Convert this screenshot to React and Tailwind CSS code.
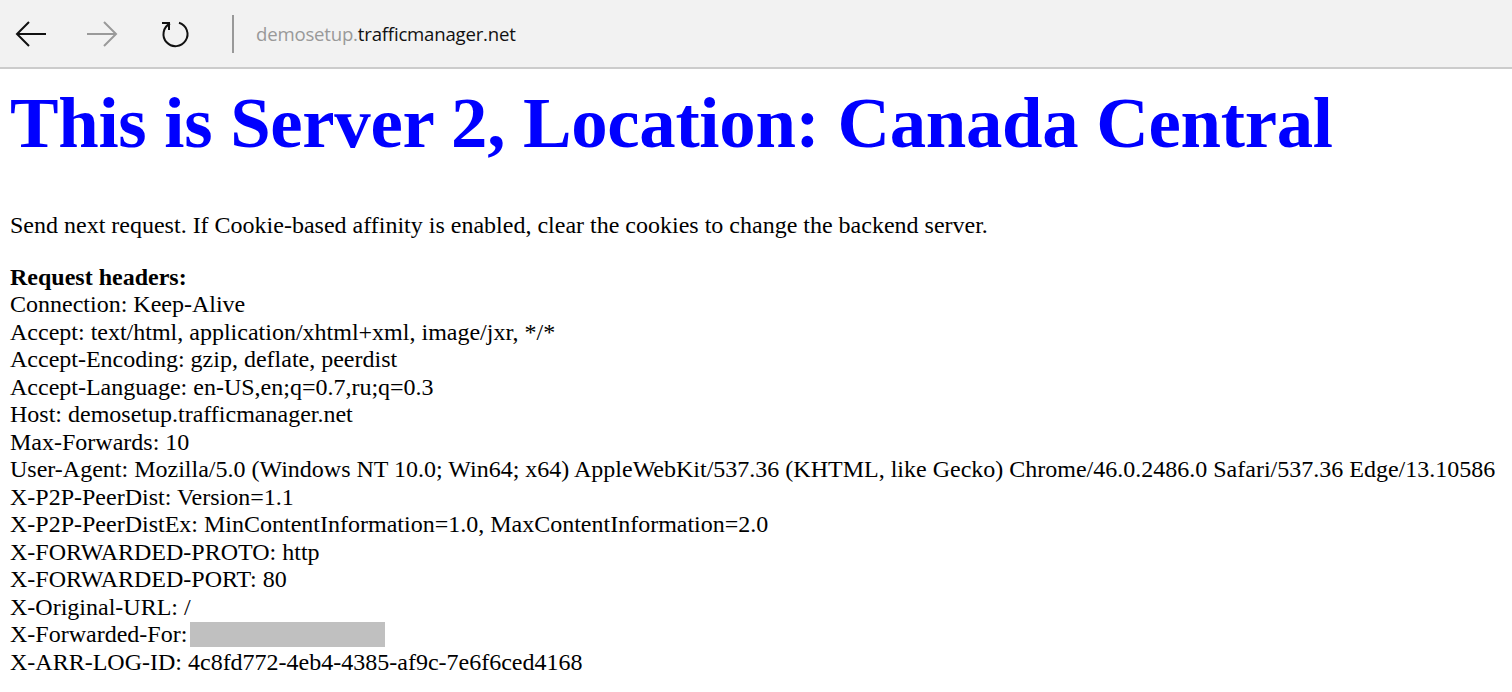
import React from "react";

const headers = [
  "Connection: Keep-Alive",
  "Accept: text/html, application/xhtml+xml, image/jxr, */*",
  "Accept-Encoding: gzip, deflate, peerdist",
  "Accept-Language: en-US,en;q=0.7,ru;q=0.3",
  "Host: demosetup.trafficmanager.net",
  "Max-Forwards: 10",
  "User-Agent: Mozilla/5.0 (Windows NT 10.0; Win64; x64) AppleWebKit/537.36 (KHTML, like Gecko) Chrome/46.0.2486.0 Safari/537.36 Edge/13.10586",
  "X-P2P-PeerDist: Version=1.1",
  "X-P2P-PeerDistEx: MinContentInformation=1.0, MaxContentInformation=2.0",
  "X-FORWARDED-PROTO: http",
  "X-FORWARDED-PORT: 80",
  "X-Original-URL: /",
];

export default function App() {
  return (
    <div className="min-h-screen bg-white overflow-hidden">
      {/* BROWSER BAR */}
      <div className="h-[69px] bg-[#f2f2f2] border-b-2 border-[#cccccc] flex items-center">
        <div className="w-[62px] flex justify-center">
          <svg width="34" height="28" viewBox="0 0 34 28" fill="none" stroke="#111" strokeWidth="2">
            <path d="M32 14H3M15 2L3 14l12 12" />
          </svg>
        </div>
        <div className="w-[80px] flex justify-center">
          <svg width="34" height="28" viewBox="0 0 34 28" fill="none" stroke="#9a9a9a" strokeWidth="2">
            <path d="M2 14h29M19 2l12 12-12 12" />
          </svg>
        </div>
        <div className="w-[66px] flex justify-center">
          <svg width="32" height="32" viewBox="0 0 32 32" fill="none" stroke="#111" strokeWidth="2">
            <path d="M11 5.5A12 12 0 1 0 20 4.7" />
            <path d="M10 12V5H3" />
          </svg>
        </div>
        <div className="w-[2px] h-[38px] bg-[#999] ml-[24px]" />
        <div className="ml-[22px] text-[18.6px] font-['Open_Sans',sans-serif] tracking-[-0.2px]">
          <span className="text-[#999]">demosetup.</span>
          <span className="text-[#111]">trafficmanager.net</span>
        </div>
      </div>

      {/* PAGE */}
      <div className="px-[10px] font-['Liberation_Serif',serif] text-black text-[24px] leading-[27.5px]">
        <h1 className="text-[#0000ff] font-bold text-[72.8px] leading-[80px] mt-[14px] tracking-[-0.3px]">
          This is Server 2, Location: Canada Central
        </h1>
        <p className="mt-[49px]">
          Send next request. If Cookie-based affinity is enabled, clear the cookies to change the backend server.
        </p>
        <div className="mt-[24px] whitespace-nowrap">
          <div className="font-bold">Request headers:</div>
          {headers.map((h) => (
            <div key={h}>{h}</div>
          ))}
          <div className="flex items-center">
            X-Forwarded-For:
            <span className="inline-block w-[195px] h-[25px] bg-[#c0c0c0] ml-[3px]" />
          </div>
          <div>X-ARR-LOG-ID: 4c8fd772-4eb4-4385-af9c-7e6f6ced4168</div>
        </div>
      </div>
    </div>
  );
}
